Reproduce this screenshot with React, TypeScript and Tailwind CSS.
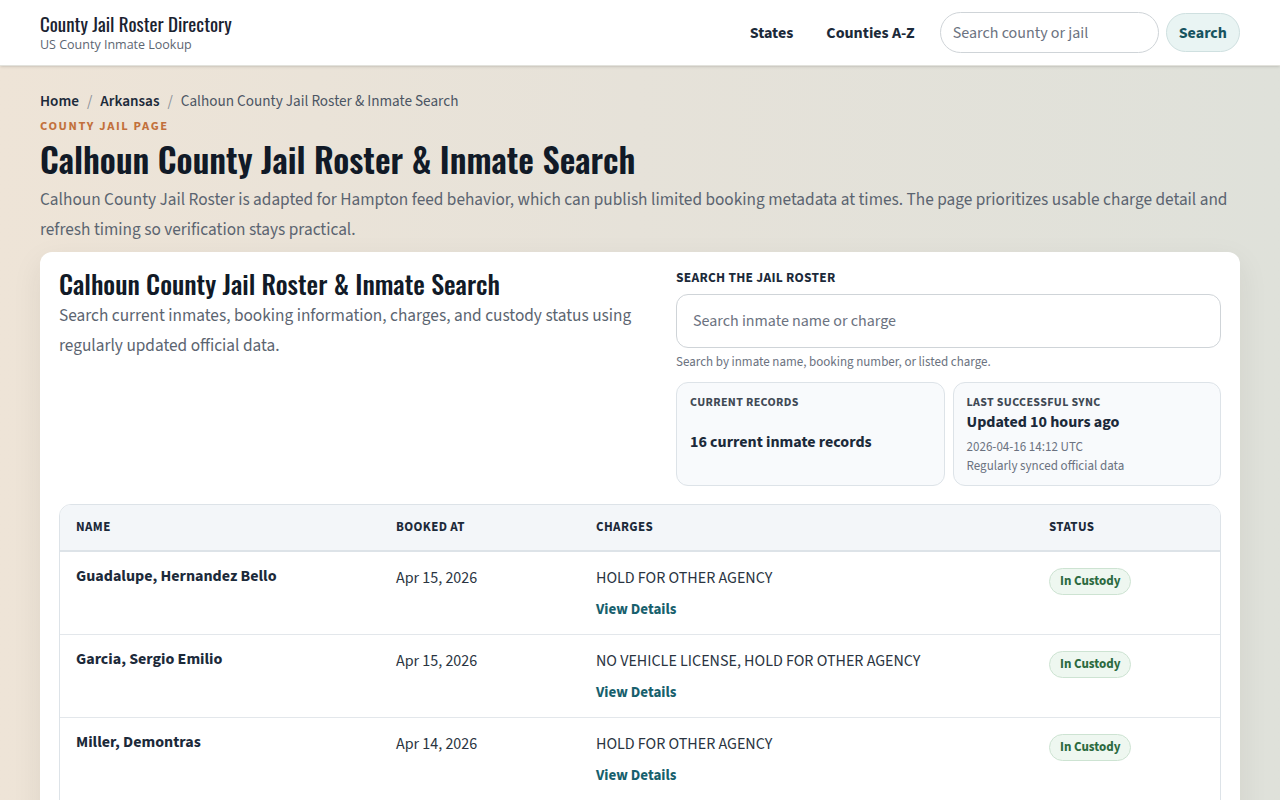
import React from "react";

const heading = "font-['Oswald','Liberation_Sans_Narrow','DejaVu_Sans_Condensed',sans-serif]";

const inmates = [
  { name: "Guadalupe, Hernandez Bello", booked: "Apr 15, 2026", charges: "HOLD FOR OTHER AGENCY" },
  { name: "Garcia, Sergio Emilio", booked: "Apr 15, 2026", charges: "NO VEHICLE LICENSE, HOLD FOR OTHER AGENCY" },
  { name: "Miller, Demontras", booked: "Apr 14, 2026", charges: "HOLD FOR OTHER AGENCY" },
  { name: "Johnson, Tyrell Deshawn", booked: "Apr 13, 2026", charges: "FAILURE TO APPEAR" },
];

const App: React.FC = () => {
  return (
    <div className="min-h-screen bg-gradient-to-r from-[#eee4d7] via-[#e6e2d9] to-[#dfe1da] font-['Source_Sans_3','Lato','Noto_Sans',sans-serif] text-[#1c2a3a]">
      <header className="flex h-[66px] items-center justify-between border-b border-[#e2e2dc] bg-white px-10 shadow-sm">
        <div>
          <div className={`${heading} text-[19px] leading-[22px] font-normal text-[#1a2230]`}>
            County Jail Roster Directory
          </div>
          <div className="mt-[3px] font-['Open_Sans',sans-serif] text-[12.5px] leading-[16px] text-[#5d6672]">
            US County Inmate Lookup
          </div>
        </div>
        <nav className="flex items-center">
          <a className="mr-[33px] text-[16px] font-bold text-[#1c2a3a]">States</a>
          <a className="mr-[25px] text-[16px] font-bold text-[#1c2a3a]">Counties A-Z</a>
          <input
            placeholder="Search county or jail"
            className="h-[41px] w-[219px] rounded-full border border-[#cfd4d8] bg-white px-3 text-[16px] placeholder:text-[#6b7280] outline-none"
          />
          <button className="ml-[7px] h-[39px] rounded-full border border-[#cfe0e0] bg-[#e9f4f3] px-3 text-[16px] font-bold text-[#17535f]">
            Search
          </button>
        </nav>
      </header>

      <main className="px-10 pt-[25px] pb-10">
        <div className="flex items-center gap-2 text-[15.2px] leading-[20px]">
          <a className="font-semibold text-[#1c2a3a]">Home</a>
          <span className="text-[#8a9098]">/</span>
          <a className="font-semibold text-[#1c2a3a]">Arkansas</a>
          <span className="text-[#8a9098]">/</span>
          <span className="text-[#4b5563]">Calhoun County Jail Roster &amp; Inmate Search</span>
        </div>
        <div className="mt-[7px] text-[12.5px] leading-[16px] font-bold tracking-[0.13em] text-[#c2703c]">COUNTY JAIL PAGE</div>
        <h1 className={`${heading} mt-[3px] text-[34px] leading-[44px] font-semibold text-[#111a27]`}>
          Calhoun County Jail Roster &amp; Inmate Search
        </h1>
        <p className="mt-[4px] text-[17.3px] leading-[30px] text-[#5b6470]">
          Calhoun County Jail Roster is adapted for Hampton feed behavior, which can publish limited booking metadata at times. The page prioritizes usable charge detail and refresh timing so verification stays practical.
        </p>

        <section className="mt-[7px] rounded-xl bg-white p-[19px] shadow-[0_10px_30px_rgba(40,40,30,0.08)]">
          <div className="grid grid-cols-[1fr_545px] gap-8">
            <div>
              <h2 className={`${heading} text-[26px] leading-[26px] font-medium text-[#111a27]`}>
                Calhoun County Jail Roster &amp; Inmate Search
              </h2>
              <p className="mt-[4px] text-[17.3px] leading-[30px] text-[#5b6470]">
                Search current inmates, booking information, charges, and custody status using regularly updated official data.
              </p>
            </div>
            <div>
              <div className="text-[13.5px] leading-[14px] font-bold tracking-[0.02em] text-[#1c2a3a]">
                SEARCH THE JAIL ROSTER
              </div>
              <input
                placeholder="Search inmate name or charge"
                className="mt-[9px] h-[54px] w-full rounded-xl border border-[#cfd4d8] bg-white px-4 text-[16px] placeholder:text-[#6b7280] outline-none"
              />
              <div className="mt-[6px] text-[13px] leading-[16px] text-[#6b7280]">
                Search by inmate name, booking number, or listed charge.
              </div>
              <div className="mt-[12px] grid grid-cols-2 gap-2">
                <div className="h-[104px] rounded-xl border border-[#dde3e8] bg-[#f8fafc] px-[13px] pt-[13px]">
                  <div className="text-[12px] leading-[14px] font-bold tracking-[0.03em] text-[#3f4954]">CURRENT RECORDS</div>
                  <div className="mt-[22px] text-[16px] leading-[20px] font-bold text-[#1c2a3a]">16 current inmate records</div>
                </div>
                <div className="h-[104px] rounded-xl border border-[#dde3e8] bg-[#f8fafc] px-[13px] pt-[13px]">
                  <div className="text-[12px] leading-[14px] font-bold tracking-[0.03em] text-[#3f4954]">LAST SUCCESSFUL SYNC</div>
                  <div className="mt-[1px] text-[16px] leading-[22px] font-bold text-[#1c2a3a]">Updated 10 hours ago</div>
                  <div className="mt-[5px] text-[13px] leading-[18px] text-[#6b7280]">2026-04-16 14:12 UTC</div>
                  <div className="mt-[1px] text-[13px] leading-[18px] text-[#6b7280]">Regularly synced official data</div>
                </div>
              </div>
            </div>
          </div>

          <div className="mt-[18px] overflow-hidden rounded-xl border border-[#dde3e8]">
            <table className="w-full table-fixed border-collapse text-left">
              <colgroup>
                <col className="w-[320px]" />
                <col className="w-[200px]" />
                <col className="w-[453px]" />
                <col />
              </colgroup>
              <thead className="bg-[#f3f6f9]">
                <tr className="border-b-2 border-[#dde3e8]">
                  {["NAME", "BOOKED AT", "CHARGES", "STATUS"].map((h) => (
                    <th key={h} className="h-[46px] px-4 pt-[1px] text-[13px] font-bold tracking-[0.03em] text-[#1c2a3a]">
                      {h}
                    </th>
                  ))}
                </tr>
              </thead>
              <tbody>
                {inmates.map((m) => (
                  <tr key={m.name} className="border-b border-[#e3e7eb] align-top">
                    <td className="px-4 pt-[13px] pb-[14px] text-[16px] leading-[22px] font-bold text-[#1c2a3a]">{m.name}</td>
                    <td className="px-4 pt-[15px] text-[16px] leading-[22px] text-[#2a3441]">{m.booked}</td>
                    <td className="px-4 pt-[15px] pb-[14px]">
                      <div className="text-[16px] leading-[22px] text-[#2a3441]">{m.charges}</div>
                      <a className="mt-[11px] block text-[15px] leading-[20px] font-bold text-[#17606d]">View Details</a>
                    </td>
                    <td className="px-4 pt-[16px]">
                      <span className="inline-block rounded-full border border-[#cde3d2] bg-[#eef7f0] px-[10px] py-[4px] text-[13px] leading-[17px] font-bold text-[#2c6a3f]">
                        In Custody
                      </span>
                    </td>
                  </tr>
                ))}
              </tbody>
            </table>
          </div>
        </section>
      </main>
    </div>
  );
};

export default App;
